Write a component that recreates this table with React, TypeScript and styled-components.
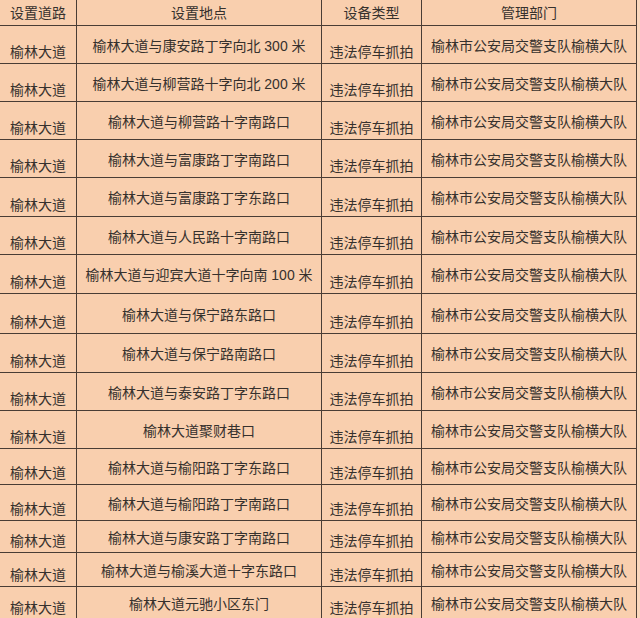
import styled, { createGlobalStyle } from 'styled-components';

const GlobalStyle = createGlobalStyle`
  html, body {
    margin: 0;
    padding: 0;
    background: #fbd8bd;
  }
  body {
    font-family: "Liberation Sans", "Noto Sans CJK SC", sans-serif;
    color: #36312d;
  }
`;

const Table = styled.div`
  width: 637px;
  height: 618px;
  overflow: hidden;
  background: #f9cfae;
`;

const Row = styled.div<{ $h: number }>`
  display: grid;
  grid-template-columns: 77px 245px 100px 215px;
  height: ${(p) => p.$h}px;
`;

const Cell = styled.div<{ $low?: boolean }>`
  box-sizing: border-box;
  display: flex;
  justify-content: center;
  align-items: ${(p) => (p.$low ? 'flex-end' : 'center')};
  padding: ${(p) => (p.$low ? '0 0 1px 0' : '2px 0 0 0')};
  border-right: 1px solid #4a3d35;
  border-bottom: 1px solid #4a3d35;
  font-size: 14px;
  line-height: 20px;
  white-space: nowrap;
  overflow: hidden;
`;

const HeaderCell = styled(Cell)`
  align-items: center;
  padding: 0;
`;

const ROAD = '榆林大道';
const TYPE = '违法停车抓拍';
const DEPT = '榆林市公安局交警支队榆横大队';

const rows: { place: string; h: number }[] = [
  { place: '榆林大道与康安路丁字向北 300 米', h: 38 },
  { place: '榆林大道与柳营路十字向北 200 米', h: 38 },
  { place: '榆林大道与柳营路十字南路口', h: 38 },
  { place: '榆林大道与富康路丁字南路口', h: 38 },
  { place: '榆林大道与富康路丁字东路口', h: 39 },
  { place: '榆林大道与人民路十字南路口', h: 38 },
  { place: '榆林大道与迎宾大道十字向南 100 米', h: 39 },
  { place: '榆林大道与保宁路东路口', h: 40 },
  { place: '榆林大道与保宁路南路口', h: 39 },
  { place: '榆林大道与泰安路丁字东路口', h: 38 },
  { place: '榆林大道聚财巷口', h: 38 },
  { place: '榆林大道与榆阳路丁字东路口', h: 36 },
  { place: '榆林大道与榆阳路丁字南路口', h: 36 },
  { place: '榆林大道与康安路丁字南路口', h: 32 },
  { place: '榆林大道与榆溪大道十字东路口', h: 34 },
  { place: '榆林大道元驰小区东门', h: 33 },
];

const App = () => {
  return (
    <>
      <GlobalStyle />
      <Table>
        <Row $h={26}>
          <HeaderCell>设置道路</HeaderCell>
          <HeaderCell>设置地点</HeaderCell>
          <HeaderCell>设备类型</HeaderCell>
          <HeaderCell>管理部门</HeaderCell>
        </Row>
        {rows.map((r, i) => (
          <Row key={i} $h={r.h}>
            <Cell $low>{ROAD}</Cell>
            <Cell>{r.place}</Cell>
            <Cell $low>{TYPE}</Cell>
            <Cell>{DEPT}</Cell>
          </Row>
        ))}
      </Table>
    </>
  );
};

export default App;
